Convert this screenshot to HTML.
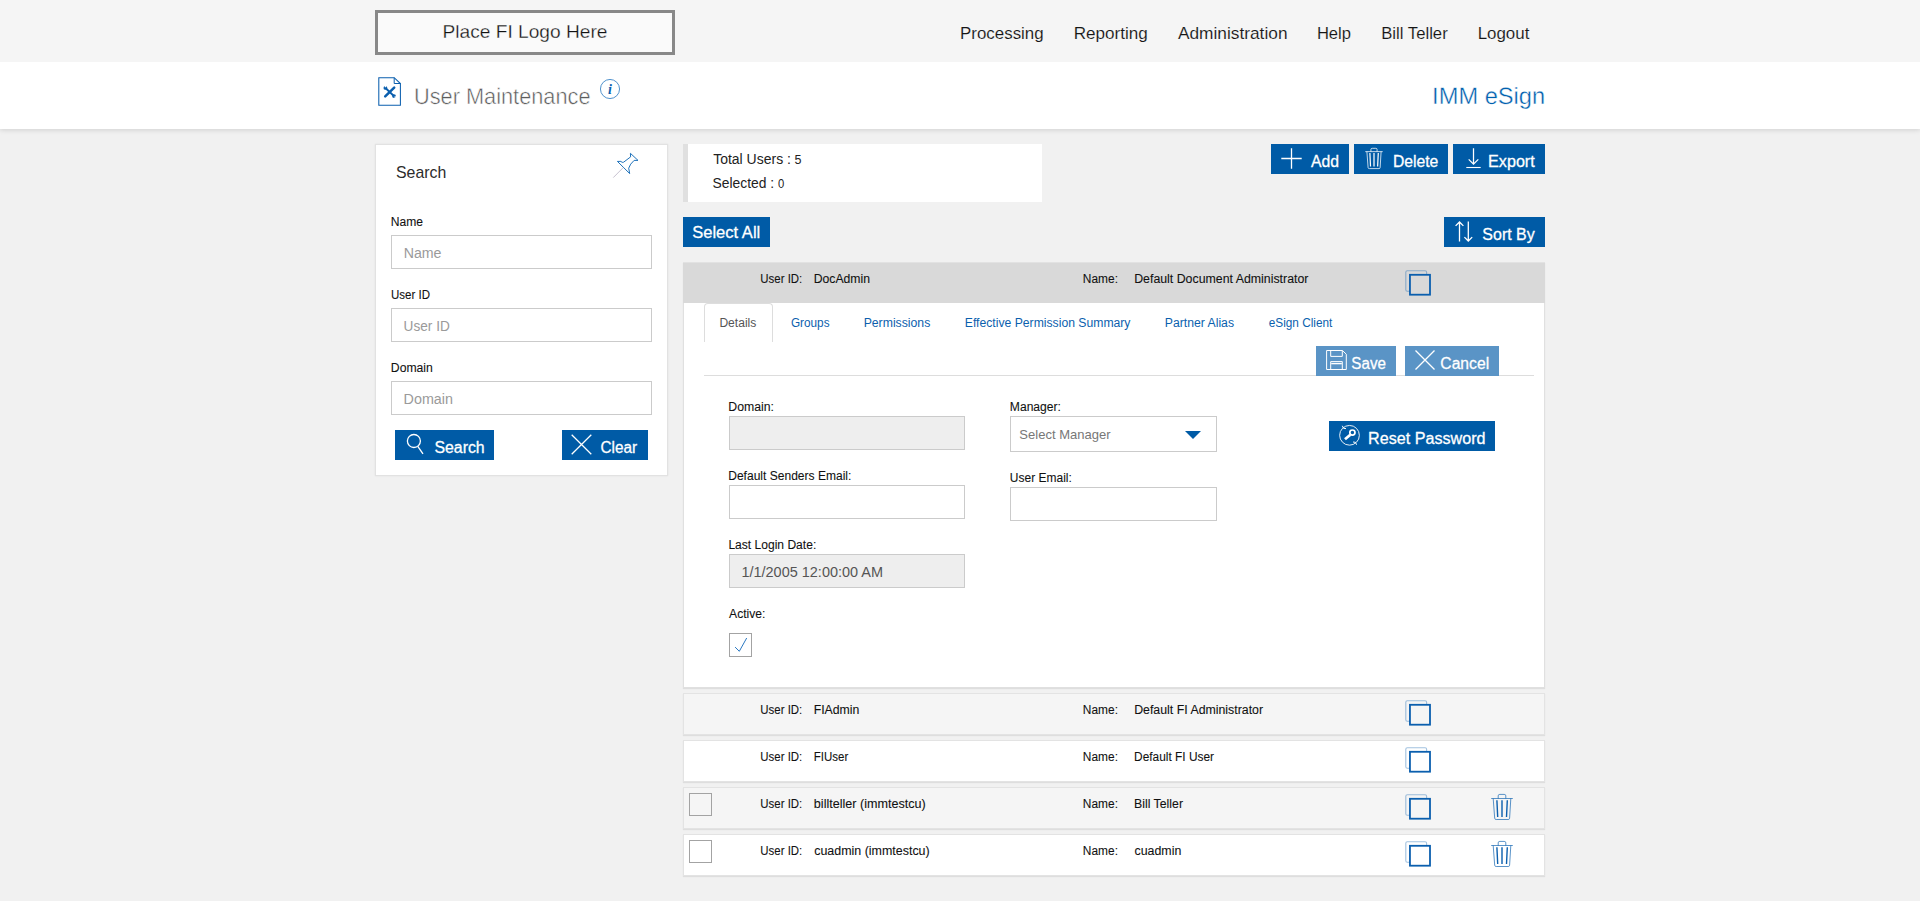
<!DOCTYPE html>
<html lang="en">
<head>
<meta charset="utf-8">
<title>User Maintenance - IMM eSign</title>
<style>
*{box-sizing:border-box;margin:0;padding:0}
html,body{width:1920px;height:901px;overflow:hidden}
body{background:#f1f1f1;font-family:"Liberation Sans",sans-serif;position:relative}
.a{position:absolute}
.t{position:absolute;white-space:nowrap;transform-origin:0 0;display:block}
.btn{position:absolute;background:#005ba6;height:30px;border:0;padding:0;margin:0;border-radius:0;display:block}
.btn.dis{background:#5a94c6}
.inp{position:absolute;background:#fff;border:1px solid #cbcbcb;height:34px;padding:0;margin:0;border-radius:0;outline:0;display:block}
.inp.ro{background:#eee}
.row{position:absolute;left:683px;width:862px;height:42px;border:1px solid #e3e3e3;box-shadow:0 1px 1px rgba(0,0,0,.08);background:#fff}
.row.alt{background:#f5f5f5}
.cb{position:absolute;width:23px;height:24px;border:1px solid #a3a3a3;background:#fff}
svg{position:absolute;overflow:visible}
</style>
</head>
<body>
<!-- top bars -->
<div class="a" id="titlebar" style="left:0;top:62px;width:1920px;height:67px;background:#fff;box-shadow:0 1px 5px rgba(0,0,0,.14)"></div>
<div class="a" id="topbar" style="left:0;top:0;width:1920px;height:62px;background:#f5f5f5"></div>
<div class="a" id="logo" style="left:375px;top:10px;width:300px;height:45px;border:3px solid #888;background:#fafafa"></div>

<!-- page icon -->
<svg id="ic-doc" style="left:378px;top:77px" width="23" height="29" viewBox="0 0 23 29" fill="none" stroke="#0b5fae" stroke-width="1.050">
<path d="M0.800 0.700H16.200L22.400 6.500V28.300H0.800Z"/><path d="M16.200 0.700V6.500H22.400" stroke-width="1"/>
<g stroke-linecap="round"><path d="M7.200 19.400L16.200 10.600" stroke-width="2.500"/><path d="M8 11.500L15.600 18.700" stroke-width="1.900"/></g>
<g stroke="none"><circle cx="7.400" cy="10.900" r="1.900" fill="#0b5fae"/><circle cx="7.500" cy="9.500" r=".85" fill="#fff"/><circle cx="16" cy="19.100" r="1.900" fill="#0b5fae"/><circle cx="17.200" cy="20" r=".85" fill="#fff"/></g>
</svg>
<svg id="ic-info" style="left:600.400px;top:79px" width="20" height="20" viewBox="0 0 20 20" fill="none" stroke="#3d86c6" stroke-width=".9"><circle cx="10" cy="10" r="9.550"/></svg>
<span class="t" style="left:607px;top:81px;transform:translateX(.9px);font-family:'Liberation Serif',serif;font-style:italic;font-weight:700;font-size:14px;line-height:18px;color:#0b5fae">i</span>

<!-- search panel -->
<div class="a" id="spanel" style="left:375px;top:144px;width:293px;height:332px;background:#fff;border:1px solid #e2e2e2;box-shadow:0 0 2px rgba(0,0,0,.07)"></div>
<svg id="ic-pin" style="left:613px;top:153px" width="26" height="26" viewBox="0 0 26 26" fill="none" stroke="#1f72ba" stroke-width="1" stroke-linejoin="miter">
<path d="M17.400 0.300L25 7.400H21.100Q17 11 15.700 15.200L16.700 20.600L4.400 8.400H7.900Q9 9.900 10.600 9.200L17.600 3.900Z"/><path d="M10.200 14.600L0.300 24.600" stroke="#b9b2c4" stroke-width=".8"/>
</svg>
<input type="text" class="inp" style="left:391px;top:235px;width:261px">
<input type="text" class="inp" style="left:391px;top:308px;width:261px">
<input type="text" class="inp" style="left:391px;top:381px;width:261px">
<button type="button" class="btn" style="left:395px;top:430px;width:99px"></button>
<svg id="ic-search" style="left:405px;top:433px" width="20" height="22" viewBox="0 0 20 22" fill="none" stroke="#fff" stroke-width="1.300"><circle cx="8.900" cy="8" r="6.500"/><path d="M12.800 13.400L18 20.800"/></svg>
<button type="button" class="btn" style="left:562px;top:430px;width:86px"></button>
<svg class="ic-x" style="left:571px;top:434px" width="21" height="21" viewBox="0 0 21 21" fill="none" stroke="#fff" stroke-width="1.300"><path d="M0.700 0.700L20.300 20.300M20.300 0.700L0.700 20.300"/></svg>

<!-- stats -->
<div class="a" id="stats" style="left:683px;top:144px;width:359px;height:58px;background:#fff;border-left:5px solid #e0e0e0"></div>
<button type="button" class="btn" style="left:683px;top:217px;width:87px"></button>

<!-- action buttons -->
<button type="button" class="btn" style="left:1271px;top:144px;width:78px"></button>
<svg id="ic-plus" style="left:1281px;top:148px" width="21" height="21" viewBox="0 0 21 21" fill="none" stroke="#fff" stroke-width="1.300"><path d="M10.500 0.300V20.700M0.300 10.500H20.700"/></svg>
<button type="button" class="btn" style="left:1354px;top:144px;width:94px"></button>
<svg class="ic-trash-w" style="left:1365px;top:148px" width="18" height="21" viewBox="0 0 22 26" fill="none" stroke="#fff"><path d="M0.200 4.500H21.800M7.200 4.500V1.800Q7.200 0.400 8.800 0.400H13.200Q14.800 0.400 14.800 1.800V4.500M2.200 4.500L3.700 24.300Q3.800 25.500 5.200 25.500H17.200Q18.500 25.500 18.600 24.300L19.800 4.500" stroke-width="1.100" stroke-opacity=".85"/><path d="M5.900 6.200L6.700 23M11 6.200V23M16.300 6.200L15.500 23" stroke-width="1.500"/></svg>
<button type="button" class="btn" style="left:1453px;top:144px;width:92px"></button>
<svg id="ic-export" style="left:1466px;top:148px" width="15" height="21" viewBox="0 0 15 21" fill="none" stroke="#fff" stroke-width="1.250"><path d="M7.500 0.300V16.200M2.700 11.400L7.500 16.200L12.300 11.400"/><path d="M0.300 19.500H14.700" stroke-width="1.100"/></svg>
<button type="button" class="btn" style="left:1444px;top:217px;width:101px"></button>
<svg id="ic-sort" style="left:1455px;top:221px" width="18" height="21" viewBox="0 0 18 21" fill="none" stroke="#fff" stroke-width="1.300"><path d="M4.500 20.500V1M0.600 4.900L4.500 1L8.400 4.900M13.300 0.500V20M9.400 16.100L13.300 20L17.200 16.100"/></svg>

<!-- panel 1 (expanded) -->
<div class="a" id="panel1" style="left:683px;top:262px;width:862px;height:426px;background:#fff;border:1px solid #e0e0e0;box-shadow:0 1px 1px rgba(0,0,0,.08)"></div>
<div class="a" id="p1head" style="left:683px;top:262px;width:862px;height:41px;background:#d9d9d9;border-top:1px solid #e2e2e2"></div>
<div class="a" id="tab1" style="left:704px;top:303px;width:69px;height:39px;border:1px solid #ddd;border-bottom:0;border-radius:4px 4px 0 0;background:#fff"></div>
<div class="a" id="hr1" style="left:704px;top:375px;width:830px;height:1px;background:#ddd"></div>
<button type="button" class="btn dis" style="left:1316px;top:346px;width:80px"></button>
<svg id="ic-save" style="left:1325.500px;top:350px" width="22" height="20" viewBox="0 0 22 20" fill="none" stroke="#fff" stroke-width="1"><path d="M0.600 0.500H16.400L20.300 4.200V19.500H0.600Z"/><path d="M4.700 0.500V6.400H16.300V0.500M4.700 19.500V11.600H16.300V19.500"/><path d="M5.200 13.600H15.800" stroke-width="1.400"/></svg>
<button type="button" class="btn dis" style="left:1405px;top:346px;width:94px"></button>
<svg class="ic-x" style="left:1415px;top:350px" width="20" height="20" viewBox="0 0 20 20" fill="none" stroke="#fff" stroke-width="1.300"><path d="M0.500 0.500L19.500 19.500M19.500 0.500L0.500 19.500"/></svg>

<input type="text" class="inp ro" style="left:729px;top:416px;width:236px">
<input type="text" class="inp" style="left:729px;top:485px;width:236px">
<input type="text" class="inp ro" style="left:729px;top:554px;width:236px">
<div class="cb" style="left:729px;top:633px"></div>
<svg id="ic-check" style="left:729px;top:633px" width="23" height="24" viewBox="0 0 23 24" fill="none" stroke="#2a78c2" stroke-width="1"><path d="M6.100 14.100L10.300 18.300L17.700 5"/></svg>
<input type="text" class="inp" style="left:1010px;top:416px;width:207px;height:36px">
<svg id="ic-tri" style="left:1185px;top:431px" width="16" height="8" viewBox="0 0 16 8"><path d="M0 0H16L8 8Z" fill="#005ba6"/></svg>
<input type="text" class="inp" style="left:1010px;top:487px;width:207px">
<button type="button" class="btn" style="left:1329px;top:421px;width:166px"></button>
<svg id="ic-key" style="left:1339px;top:425px" width="21" height="21" viewBox="0 0 21 21" fill="none" stroke="#fff" stroke-width=".9"><circle cx="10.500" cy="10.300" r="9.850"/><path d="M3.300 0.800L4.600 3.300L7 3.600M17.600 19.700L16.400 17.300L14 17" stroke-width="1"/><circle cx="13.400" cy="7.600" r="2.600" stroke-width="1.700"/><path d="M11.300 9.800L6 14.300" stroke-width="2.800"/></svg>

<!-- rows -->
<div class="row alt" style="top:693px"></div>
<div class="row" style="top:740px"></div>
<div class="row alt" style="top:787px"></div>
<div class="row" style="top:834px"></div>
<div class="cb" style="left:689px;top:793px;height:23px;background:#f5f5f5"></div>
<div class="cb" style="left:689px;top:840px;height:23px"></div>
<svg class="ic-copy" style="left:1405px;top:270px" width="27" height="26" viewBox="0 0 27 26" fill="none"><rect x="0.800" y="0.700" width="20.800" height="20.500" rx="1.500" stroke="#0b5fae" stroke-opacity=".38" stroke-width="1.100"/><rect x="4.950" y="4.800" width="20.050" height="19.900" stroke="#0b5fae" stroke-width="1.800" fill="#d9d9d9"/></svg>
<svg class="ic-copy" style="left:1405px;top:700px" width="27" height="26" viewBox="0 0 27 26" fill="none"><rect x="0.800" y="0.700" width="20.800" height="20.500" rx="1.500" stroke="#0b5fae" stroke-opacity=".38" stroke-width="1.100"/><rect x="4.950" y="4.800" width="20.050" height="19.900" stroke="#0b5fae" stroke-width="1.800" fill="#f5f5f5"/></svg>
<svg class="ic-copy" style="left:1405px;top:747px" width="27" height="26" viewBox="0 0 27 26" fill="none"><rect x="0.800" y="0.700" width="20.800" height="20.500" rx="1.500" stroke="#0b5fae" stroke-opacity=".38" stroke-width="1.100"/><rect x="4.950" y="4.800" width="20.050" height="19.900" stroke="#0b5fae" stroke-width="1.800" fill="#fff"/></svg>
<svg class="ic-copy" style="left:1405px;top:794px" width="27" height="26" viewBox="0 0 27 26" fill="none"><rect x="0.800" y="0.700" width="20.800" height="20.500" rx="1.500" stroke="#0b5fae" stroke-opacity=".38" stroke-width="1.100"/><rect x="4.950" y="4.800" width="20.050" height="19.900" stroke="#0b5fae" stroke-width="1.800" fill="#f5f5f5"/></svg>
<svg class="ic-copy" style="left:1405px;top:841px" width="27" height="26" viewBox="0 0 27 26" fill="none"><rect x="0.800" y="0.700" width="20.800" height="20.500" rx="1.500" stroke="#0b5fae" stroke-opacity=".38" stroke-width="1.100"/><rect x="4.950" y="4.800" width="20.050" height="19.900" stroke="#0b5fae" stroke-width="1.800" fill="#fff"/></svg>
<svg class="ic-trash" style="left:1491px;top:794px" width="22" height="26" viewBox="0 0 22 26" fill="none" stroke="#0b5fae"><path d="M0.200 4.500H21.800M7.200 4.500V1.800Q7.200 0.400 8.800 0.400H13.200Q14.800 0.400 14.800 1.800V4.500M2.200 4.500L3.700 24.300Q3.800 25.500 5.200 25.500H17.200Q18.500 25.500 18.600 24.300L19.800 4.500" stroke-width=".9" stroke-opacity=".75"/><path d="M5.900 6.200L6.700 23M11 6.200V23M16.300 6.200L15.500 23" stroke-width="1.400"/></svg>
<svg class="ic-trash" style="left:1491px;top:841px" width="22" height="26" viewBox="0 0 22 26" fill="none" stroke="#0b5fae"><path d="M0.200 4.500H21.800M7.200 4.500V1.800Q7.200 0.400 8.800 0.400H13.200Q14.800 0.400 14.800 1.800V4.500M2.200 4.500L3.700 24.300Q3.800 25.500 5.200 25.500H17.200Q18.500 25.500 18.600 24.300L19.800 4.500" stroke-width=".9" stroke-opacity=".75"/><path d="M5.900 6.200L6.700 23M11 6.200V23M16.300 6.200L15.500 23" stroke-width="1.400"/></svg>
<span class="t" style="left:442px;top:20px;font-size:19px;line-height:24px;color:#111;transform:translateX(0.53px) scaleX(1.0077);-webkit-text-stroke:0.3px #fafafa;">Place FI Logo Here</span>
<span class="t" style="left:960px;top:23px;font-size:17px;line-height:21px;color:#161616;transform:translateX(0.09px) scaleX(0.9930);-webkit-text-stroke:0.12px #f5f5f5;">Processing</span>
<span class="t" style="left:1073px;top:23px;font-size:17px;line-height:21px;color:#161616;transform:translateX(0.68px) scaleX(1.0047);-webkit-text-stroke:0.12px #f5f5f5;">Reporting</span>
<span class="t" style="left:1177px;top:23px;font-size:17px;line-height:21px;color:#161616;transform:translateX(0.98px) scaleX(1.0167);-webkit-text-stroke:0.12px #f5f5f5;">Administration</span>
<span class="t" style="left:1316px;top:23px;font-size:17px;line-height:21px;color:#161616;transform:translateX(0.89px) scaleX(0.9753);-webkit-text-stroke:0.12px #f5f5f5;">Help</span>
<span class="t" style="left:1381px;top:23px;font-size:17px;line-height:21px;color:#161616;transform:translateX(0.15px) scaleX(0.9829);-webkit-text-stroke:0.12px #f5f5f5;">Bill Teller</span>
<span class="t" style="left:1477px;top:23px;font-size:17px;line-height:21px;color:#161616;transform:translateX(0.66px) scaleX(0.9940);-webkit-text-stroke:0.12px #f5f5f5;">Logout</span>
<span class="t" style="left:414px;top:82px;font-size:22.8px;line-height:28px;color:#5c5c5c;transform:translateX(0.05px) scaleX(0.9537);text-rendering:geometricPrecision;-webkit-text-stroke:0.5px #fff;">User Maintenance</span>
<span class="t" style="left:1432px;top:82px;font-size:23.5px;line-height:29px;color:#005fae;transform:translateX(0.11px) scaleX(1.0066);text-rendering:geometricPrecision;-webkit-text-stroke:0.4px #fff;">IMM eSign</span>
<span class="t" style="left:396px;top:162px;font-size:17px;line-height:21px;color:#2b2b2b;transform:translateX(0.01px) scaleX(0.9332);">Search</span>
<span class="t" style="left:390px;top:215px;font-size:12px;line-height:15px;color:#111;transform:translateX(0.83px) scaleX(1.0077);-webkit-text-stroke:0.09px #111;">Name</span>
<span class="t" style="left:390px;top:288px;font-size:12px;line-height:15px;color:#111;transform:translateX(0.97px) scaleX(0.9597);-webkit-text-stroke:0.09px #111;">User ID</span>
<span class="t" style="left:390px;top:361px;font-size:12px;line-height:15px;color:#111;transform:translateX(0.82px) scaleX(1.0164);-webkit-text-stroke:0.09px #111;">Domain</span>
<span class="t" style="left:403px;top:244px;font-size:14px;line-height:18px;color:#9a9a9a;transform:translateX(0.64px) scaleX(1.0135);">Name</span>
<span class="t" style="left:403px;top:317px;font-size:14px;line-height:18px;color:#9a9a9a;transform:translateX(0.62px) scaleX(0.9728);">User ID</span>
<span class="t" style="left:403px;top:390px;font-size:14px;line-height:18px;color:#9a9a9a;transform:translateX(0.59px) scaleX(1.0234);">Domain</span>
<span class="t" style="left:434px;top:438px;font-size:16px;line-height:20px;color:#fff;transform:translateX(0.40px) scaleX(0.9917);-webkit-text-stroke:0.28px #fff;">Search</span>
<span class="t" style="left:600px;top:438px;font-size:16px;line-height:20px;color:#fff;transform:translateX(0.51px) scaleX(0.9581);-webkit-text-stroke:0.28px #fff;">Clear</span>
<span class="t" style="left:713px;top:150px;font-size:14px;line-height:18px;color:#222;transform:translateX(0.16px) scaleX(0.9995);">Total Users :</span>
<span class="t" style="left:794px;top:153px;font-size:12px;line-height:15px;color:#222;transform:translateX(0.58px) scaleX(1.0450);">5</span>
<span class="t" style="left:712px;top:174px;font-size:14px;line-height:18px;color:#222;transform:translateX(0.51px) scaleX(0.9887);">Selected :</span>
<span class="t" style="left:777px;top:177px;font-size:12px;line-height:15px;color:#222;transform:translateX(0.95px) scaleX(0.9370);">0</span>
<span class="t" style="left:692px;top:223px;font-size:16px;line-height:20px;color:#fff;transform:translateX(0.21px) scaleX(1.0339);-webkit-text-stroke:0.28px #fff;">Select All</span>
<span class="t" style="left:1311px;top:152px;font-size:16px;line-height:20px;color:#fff;transform:translateX(0.10px) scaleX(0.9844);-webkit-text-stroke:0.28px #fff;">Add</span>
<span class="t" style="left:1392px;top:152px;font-size:16px;line-height:20px;color:#fff;transform:translateX(0.92px) scaleX(0.9810);-webkit-text-stroke:0.28px #fff;">Delete</span>
<span class="t" style="left:1488px;top:152px;font-size:16px;line-height:20px;color:#fff;transform:translateX(0.11px) scaleX(1.0075);-webkit-text-stroke:0.28px #fff;">Export</span>
<span class="t" style="left:1482px;top:225px;font-size:16px;line-height:20px;color:#fff;transform:translateX(0.35px) scaleX(0.9983);-webkit-text-stroke:0.28px #fff;">Sort By</span>
<span class="t" style="left:760px;top:272px;font-size:12px;line-height:15px;color:#111;transform:translateX(0.34px) scaleX(0.9530);-webkit-text-stroke:0.09px #111;">User ID:</span>
<span class="t" style="left:813px;top:272px;font-size:12px;line-height:15px;color:#111;transform:translateX(0.66px) scaleX(1.0180);-webkit-text-stroke:0.09px #111;">DocAdmin</span>
<span class="t" style="left:1082px;top:272px;font-size:12px;line-height:15px;color:#111;transform:translateX(0.87px) scaleX(0.9925);-webkit-text-stroke:0.09px #111;">Name:</span>
<span class="t" style="left:1134px;top:272px;font-size:12px;line-height:15px;color:#111;transform:translateX(0.17px) scaleX(1.0285);-webkit-text-stroke:0.09px #111;">Default Document Administrator</span>
<span class="t" style="left:760px;top:703px;font-size:12px;line-height:15px;color:#111;transform:translateX(0.34px) scaleX(0.9530);-webkit-text-stroke:0.09px #111;">User ID:</span>
<span class="t" style="left:813px;top:703px;font-size:12px;line-height:15px;color:#111;transform:translateX(0.65px) scaleX(1.0221);-webkit-text-stroke:0.09px #111;">FIAdmin</span>
<span class="t" style="left:1082px;top:703px;font-size:12px;line-height:15px;color:#111;transform:translateX(0.87px) scaleX(0.9925);-webkit-text-stroke:0.09px #111;">Name:</span>
<span class="t" style="left:1134px;top:703px;font-size:12px;line-height:15px;color:#111;transform:translateX(0.17px) scaleX(1.0281);-webkit-text-stroke:0.09px #111;">Default FI Administrator</span>
<span class="t" style="left:760px;top:750px;font-size:12px;line-height:15px;color:#111;transform:translateX(0.34px) scaleX(0.9530);-webkit-text-stroke:0.09px #111;">User ID:</span>
<span class="t" style="left:813px;top:750px;font-size:12px;line-height:15px;color:#111;transform:translateX(0.83px) scaleX(0.9581);-webkit-text-stroke:0.09px #111;">FIUser</span>
<span class="t" style="left:1082px;top:750px;font-size:12px;line-height:15px;color:#111;transform:translateX(0.87px) scaleX(0.9925);-webkit-text-stroke:0.09px #111;">Name:</span>
<span class="t" style="left:1134px;top:750px;font-size:12px;line-height:15px;color:#111;transform:translateX(0.09px) scaleX(0.9900);-webkit-text-stroke:0.09px #111;">Default FI User</span>
<span class="t" style="left:760px;top:797px;font-size:12px;line-height:15px;color:#111;transform:translateX(0.34px) scaleX(0.9530);-webkit-text-stroke:0.09px #111;">User ID:</span>
<span class="t" style="left:813px;top:797px;font-size:12px;line-height:15px;color:#111;transform:translateX(0.87px) scaleX(1.0487);-webkit-text-stroke:0.09px #111;">billteller (immtestcu)</span>
<span class="t" style="left:1082px;top:797px;font-size:12px;line-height:15px;color:#111;transform:translateX(0.87px) scaleX(0.9925);-webkit-text-stroke:0.09px #111;">Name:</span>
<span class="t" style="left:1134px;top:797px;font-size:12px;line-height:15px;color:#111;transform:translateX(0.04px) scaleX(1.0241);-webkit-text-stroke:0.09px #111;">Bill Teller</span>
<span class="t" style="left:760px;top:844px;font-size:12px;line-height:15px;color:#111;transform:translateX(0.34px) scaleX(0.9530);-webkit-text-stroke:0.09px #111;">User ID:</span>
<span class="t" style="left:814px;top:844px;font-size:12px;line-height:15px;color:#111;transform:translateX(0.17px) scaleX(1.0372);-webkit-text-stroke:0.09px #111;">cuadmin (immtestcu)</span>
<span class="t" style="left:1082px;top:844px;font-size:12px;line-height:15px;color:#111;transform:translateX(0.87px) scaleX(0.9925);-webkit-text-stroke:0.09px #111;">Name:</span>
<span class="t" style="left:1134px;top:844px;font-size:12px;line-height:15px;color:#111;transform:translateX(0.49px) scaleX(1.0319);-webkit-text-stroke:0.09px #111;">cuadmin</span>
<span class="t" style="left:719px;top:316px;font-size:12px;line-height:15px;color:#555;transform:translateX(0.41px) scaleX(1.0050);">Details</span>
<span class="t" style="left:790px;top:316px;font-size:12px;line-height:15px;color:#0b5fae;transform:translateX(0.96px) scaleX(0.9796);">Groups</span>
<span class="t" style="left:863px;top:316px;font-size:12px;line-height:15px;color:#0b5fae;transform:translateX(0.63px) scaleX(1.0201);">Permissions</span>
<span class="t" style="left:964px;top:316px;font-size:12px;line-height:15px;color:#0b5fae;transform:translateX(0.82px) scaleX(1.0152);">Effective Permission Summary</span>
<span class="t" style="left:1164px;top:316px;font-size:12px;line-height:15px;color:#0b5fae;transform:translateX(0.84px) scaleX(1.0167);">Partner Alias</span>
<span class="t" style="left:1268px;top:316px;font-size:12px;line-height:15px;color:#0b5fae;transform:translateX(0.72px) scaleX(0.9835);">eSign Client</span>
<span class="t" style="left:1351px;top:354px;font-size:16px;line-height:20px;color:#fff;transform:translateX(0.35px) scaleX(0.9473);-webkit-text-stroke:0.28px #fff;">Save</span>
<span class="t" style="left:1440px;top:354px;font-size:16px;line-height:20px;color:#fff;transform:translateX(0.31px) scaleX(0.9799);-webkit-text-stroke:0.28px #fff;">Cancel</span>
<span class="t" style="left:728px;top:400px;font-size:12px;line-height:15px;color:#111;transform:translateX(0.28px) scaleX(1.0221);-webkit-text-stroke:0.09px #111;">Domain:</span>
<span class="t" style="left:728px;top:469px;font-size:12px;line-height:15px;color:#111;transform:translateX(0.22px) scaleX(1.0034);-webkit-text-stroke:0.09px #111;">Default Senders Email:</span>
<span class="t" style="left:728px;top:538px;font-size:12px;line-height:15px;color:#111;transform:translateX(0.41px) scaleX(1.0049);-webkit-text-stroke:0.09px #111;">Last Login Date:</span>
<span class="t" style="left:729px;top:607px;font-size:12px;line-height:15px;color:#111;transform:translateX(0.05px) scaleX(1.0094);-webkit-text-stroke:0.09px #111;">Active:</span>
<span class="t" style="left:1009px;top:400px;font-size:12px;line-height:15px;color:#111;transform:translateX(0.83px) scaleX(1.0086);-webkit-text-stroke:0.09px #111;">Manager:</span>
<span class="t" style="left:1009px;top:471px;font-size:12px;line-height:15px;color:#111;transform:translateX(0.86px) scaleX(0.9992);-webkit-text-stroke:0.09px #111;">User Email:</span>
<span class="t" style="left:1019px;top:427px;font-size:13px;line-height:16px;color:#777;transform:translateX(0.37px) scaleX(1.0012);">Select Manager</span>
<span class="t" style="left:741px;top:563px;font-size:14px;line-height:18px;color:#555;transform:translateX(0.44px) scaleX(1.0334);">1/1/2005 12:00:00 AM</span>
<span class="t" style="left:1368px;top:429px;font-size:16px;line-height:20px;color:#fff;transform:translateX(0.09px) scaleX(1.0079);-webkit-text-stroke:0.28px #fff;">Reset Password</span>
</body>
</html>
